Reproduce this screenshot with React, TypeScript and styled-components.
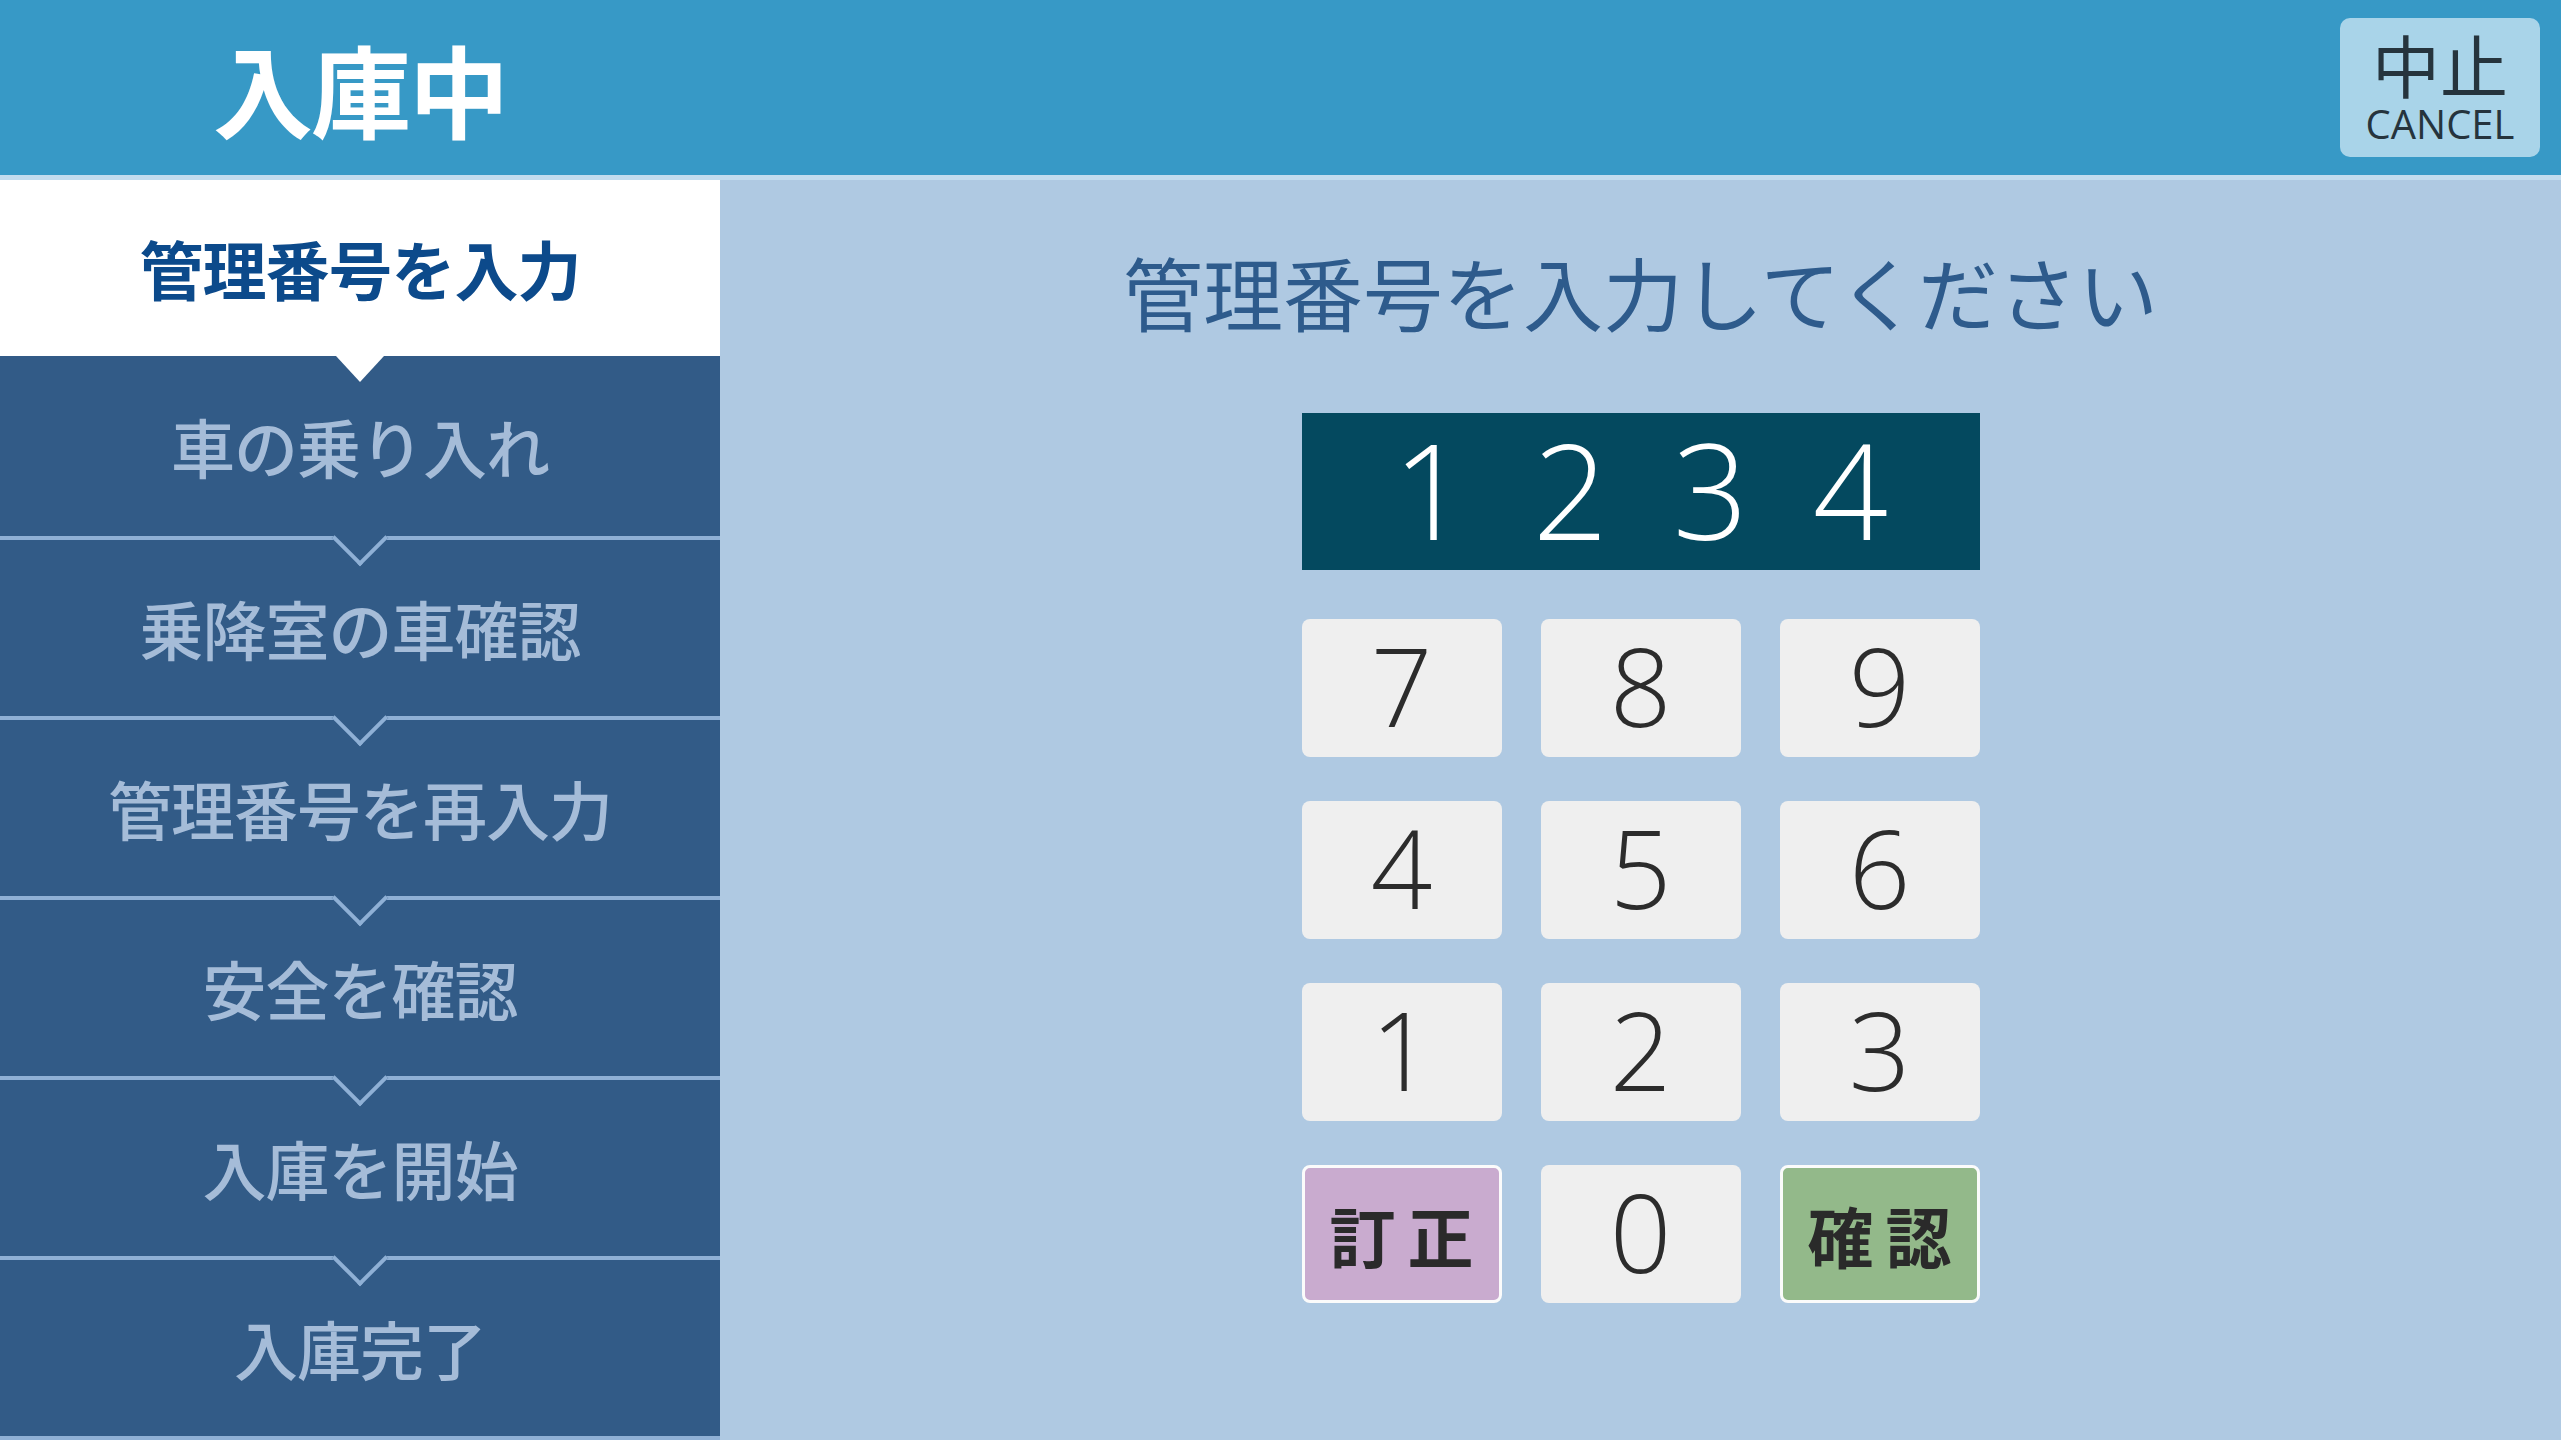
import styled, { createGlobalStyle } from 'styled-components'

const GlobalStyle = createGlobalStyle`
  html, body, #root {
    margin: 0;
    padding: 0;
    height: 100%;
  }
  body {
    overflow: hidden;
    font-family: "Noto Sans CJK JP", "Noto Sans", sans-serif;
  }
  *, *::before, *::after {
    box-sizing: border-box;
  }
`

const Screen = styled.div`
  width: 2561px;
  height: 1440px;
  display: flex;
  flex-direction: column;
  background-color: #afc9e2;
`

const Header = styled.header`
  height: 175px;
  flex-shrink: 0;
  display: flex;
  align-items: center;
  background-color: #3799c6;
  padding-right: 21px;
`

const HeaderStripe = styled.div`
  height: 5px;
  flex-shrink: 0;
  background-color: #c2dcee;
`

const Title = styled.h1`
  width: 720px;
  margin: 0;
  text-align: center;
  color: #ffffff;
  font-size: 100px;
  font-weight: 700;
  line-height: 1;
  letter-spacing: -2px;
`

const Spacer = styled.div`
  flex: 1;
`

const CancelButton = styled.button`
  width: 200px;
  height: 139px;
  border: none;
  border-radius: 10px;
  background-color: #a9d4e9;
  color: #26343d;
  display: flex;
  flex-direction: column;
  align-items: center;
  justify-content: center;
  gap: 10px;
  padding: 0 0 2px;
  cursor: pointer;
`

const CancelJp = styled.span`
  font-family: "Noto Sans CJK JP", sans-serif;
  font-size: 68px;
  line-height: 64px;
  font-weight: 400;
`

const CancelEn = styled.span`
  font-family: "Open Sans", "Liberation Sans", sans-serif;
  font-size: 40px;
  line-height: 36px;
  font-weight: 400;
`

const Body = styled.div`
  flex: 1;
  display: flex;
`

const Sidebar = styled.nav`
  width: 720px;
  flex-shrink: 0;
  display: flex;
  flex-direction: column;
  background-color: #325b87;
  border-bottom: 4px solid #8fb0d5;
`

const Step = styled.div<{ $active?: boolean; $divider?: boolean }>`
  position: relative;
  height: ${(p) => (p.$active ? '176px' : '180px')};
  flex-shrink: 0;
  display: flex;
  align-items: center;
  justify-content: center;
  font-size: 64px;
  font-weight: ${(p) => (p.$active ? 700 : 500)};
  letter-spacing: -1px;
  color: ${(p) => (p.$active ? '#0c4a8b' : '#a5bcd8')};
  background-color: ${(p) => (p.$active ? '#ffffff' : '#325b87')};
  border-top: ${(p) => (p.$divider ? '4px solid #8fb0d5' : 'none')};
  padding-bottom: 2px;

  /* white pointer below the current step */
  &::after {
    content: '';
    display: ${(p) => (p.$active ? 'block' : 'none')};
    position: absolute;
    left: 50%;
    bottom: -26px;
    transform: translateX(-50%);
    border-left: 24px solid transparent;
    border-right: 24px solid transparent;
    border-top: 26px solid #ffffff;
    z-index: 2;
  }

  /* chevron drawn into the divider line */
  &::before {
    content: '';
    display: ${(p) => (p.$divider ? 'block' : 'none')};
    position: absolute;
    left: 50%;
    top: -2px;
    width: 40px;
    height: 40px;
    background-color: #325b87;
    border-right: 4px solid #8fb0d5;
    border-bottom: 4px solid #8fb0d5;
    transform: translate(-50%, -50%) rotate(45deg);
  }
`

const Main = styled.main`
  flex: 1;
  display: flex;
  flex-direction: column;
  align-items: center;
  padding-top: 70px;
`

const Prompt = styled.p`
  margin: 0 0 83px;
  font-size: 80px;
  line-height: 80px;
  font-weight: 400;
  color: #2e5b8c;
`

const Display = styled.div`
  width: 678px;
  height: 157px;
  display: flex;
  align-items: center;
  justify-content: center;
  background-color: #04495f;
  margin-bottom: 49px;
`

const DisplayDigit = styled.span`
  width: 140px;
  text-align: center;
  font-family: "Open Sans", "Liberation Sans", sans-serif;
  font-weight: 300;
  font-size: 132px;
  line-height: 1;
  color: #ffffff;
  margin-top: -6px;
`

const Keypad = styled.div`
  width: 678px;
  display: grid;
  grid-template-columns: repeat(3, 1fr);
  grid-auto-rows: 138px;
  column-gap: 39px;
  row-gap: 44px;
`

const Key = styled.button<{ $tone?: 'fix' | 'ok' }>`
  border-radius: 8px;
  border: ${(p) => (p.$tone ? '3px solid #fbfbfb' : 'none')};
  background-color: ${(p) =>
    p.$tone === 'fix' ? '#c9abcf' : p.$tone === 'ok' ? '#93b98a' : '#efefef'};
  color: #2c2c2c;
  display: flex;
  align-items: center;
  justify-content: center;
  cursor: pointer;
  padding: 0;
`

const KeyDigit = styled.span`
  font-family: "Open Sans", "Liberation Sans", sans-serif;
  font-weight: 300;
  font-size: 108px;
  line-height: 1;
  margin-top: -4px;
`

const KeyLabel = styled.span`
  font-family: "Noto Sans CJK JP", sans-serif;
  font-weight: 700;
  font-size: 66px;
  line-height: 1;
  letter-spacing: 12px;
  margin-right: -12px;
  color: #2a2a2a;
`

const steps = [
  '管理番号を入力',
  '車の乗り入れ',
  '乗降室の車確認',
  '管理番号を再入力',
  '安全を確認',
  '入庫を開始',
  '入庫完了',
]

const digits = ['7', '8', '9', '4', '5', '6', '1', '2', '3']

const App = () => {
  const current = 0
  return (
    <>
      <GlobalStyle />
      <Screen>
        <Header>
          <Title>入庫中</Title>
          <Spacer />
          <CancelButton>
            <CancelJp>中止</CancelJp>
            <CancelEn>CANCEL</CancelEn>
          </CancelButton>
        </Header>
        <HeaderStripe />
        <Body>
          <Sidebar>
            {steps.map((s, i) => (
              <Step key={s} $active={i === current} $divider={i > current + 1}>
                {s}
              </Step>
            ))}
          </Sidebar>
          <Main>
            <Prompt>管理番号を入力してください</Prompt>
            <Display>
              {['1', '2', '3', '4'].map((d) => (
                <DisplayDigit key={d}>{d}</DisplayDigit>
              ))}
            </Display>
            <Keypad>
              {digits.map((d) => (
                <Key key={d}>
                  <KeyDigit>{d}</KeyDigit>
                </Key>
              ))}
              <Key $tone="fix">
                <KeyLabel>訂正</KeyLabel>
              </Key>
              <Key>
                <KeyDigit>0</KeyDigit>
              </Key>
              <Key $tone="ok">
                <KeyLabel>確認</KeyLabel>
              </Key>
            </Keypad>
          </Main>
        </Body>
      </Screen>
    </>
  )
}

export default App
